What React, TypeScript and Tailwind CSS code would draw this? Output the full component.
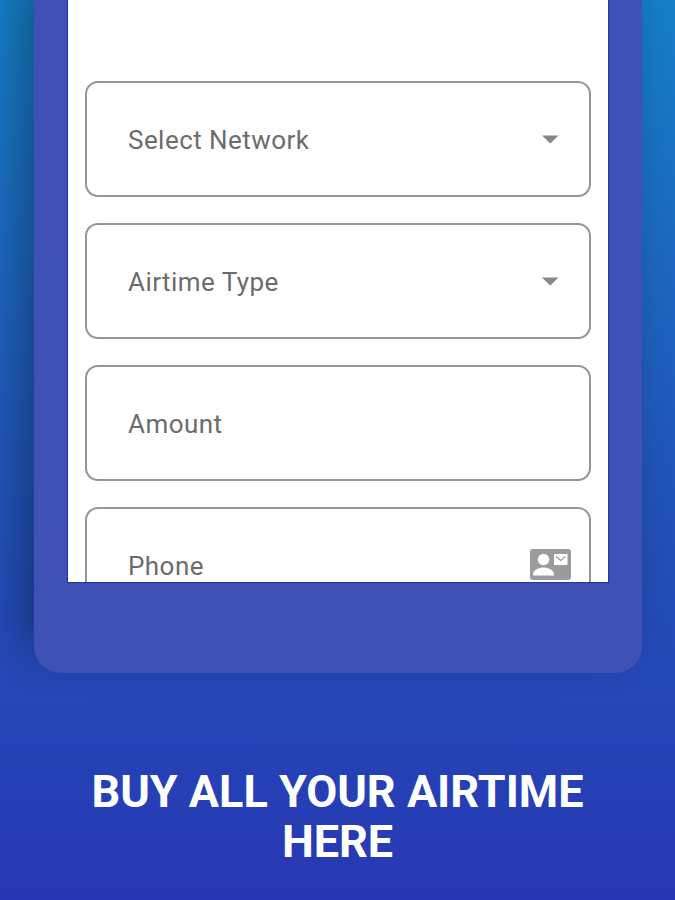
import React from 'react';

interface Field {
  label: string;
  icon?: 'dropdown' | 'contact';
}

const fields: Field[] = [
  { label: 'Select Network', icon: 'dropdown' },
  { label: 'Airtime Type', icon: 'dropdown' },
  { label: 'Amount' },
  { label: 'Phone', icon: 'contact' },
];

const DropdownIcon: React.FC = () => (
  <svg className="mt-px mr-[30px] h-[9px] w-[17px]" viewBox="0 0 17 9" fill="#868686">
    <path d="M0 0.5h16.500L8.250 8.500z" />
  </svg>
);

const ContactIcon: React.FC = () => (
  <svg className="mr-[18px] mb-0.5 h-[31px] w-[41px]" viewBox="0 0 41 31">
    <rect width="41" height="31" rx="3" fill="#9b9b9b" />
    <circle cx="13.5" cy="10.5" r="5.7" fill="#fff" />
    <path d="M3 26.500v-1.500c0-4 6-6.500 10.500-6.500s10.500 2.500 10.500 6.500v1.500z" fill="#fff" />
    <rect x="24" y="5" width="13.500" height="11" fill="#fff" />
    <path d="M26 7.500l4.750 4 4.750-4" fill="none" stroke="#9b9b9b" strokeWidth="1.300" />
  </svg>
);

const FormField: React.FC<{ field: Field }> = ({ field }) => (
  <div className="flex h-[116px] shrink-0 items-center justify-between rounded-[13px] border-2 border-[#959595] pl-[41px]">
    <span className="pt-0.5 text-[26px] leading-8 tracking-[0.45px] text-[#6c6c6c]">{field.label}</span>
    {field.icon === 'dropdown' && <DropdownIcon />}
    {field.icon === 'contact' && <ContactIcon />}
  </div>
);

export default function App() {
  return (
    <div className="h-[900px] w-[675px] overflow-hidden bg-linear-to-b from-[#157fc8] via-[#2057bb] via-50% to-[#2737b3] font-['Roboto',sans-serif]">
      {/* Phone frame */}
      <div className="ml-[34px] h-[673px] w-[608px] rounded-b-[27px] bg-[#4051b6] px-[34px] shadow-[-14px_-20px_44px_rgba(0,0,0,0.32)]">
        <div className="flex h-[582px] flex-col gap-[26px] overflow-hidden bg-white px-[17px] pt-[81px] shadow-[0_0_1px_1px_#2138ab]">
          {fields.map((field) => (
            <FormField key={field.label} field={field} />
          ))}
        </div>
      </div>

      {/* Caption */}
      <h1 className="mt-[94px] text-center text-[45px] leading-[50px] font-bold text-white">
        BUY ALL YOUR AIRTIME
        <br />
        HERE
      </h1>
    </div>
  );
}
